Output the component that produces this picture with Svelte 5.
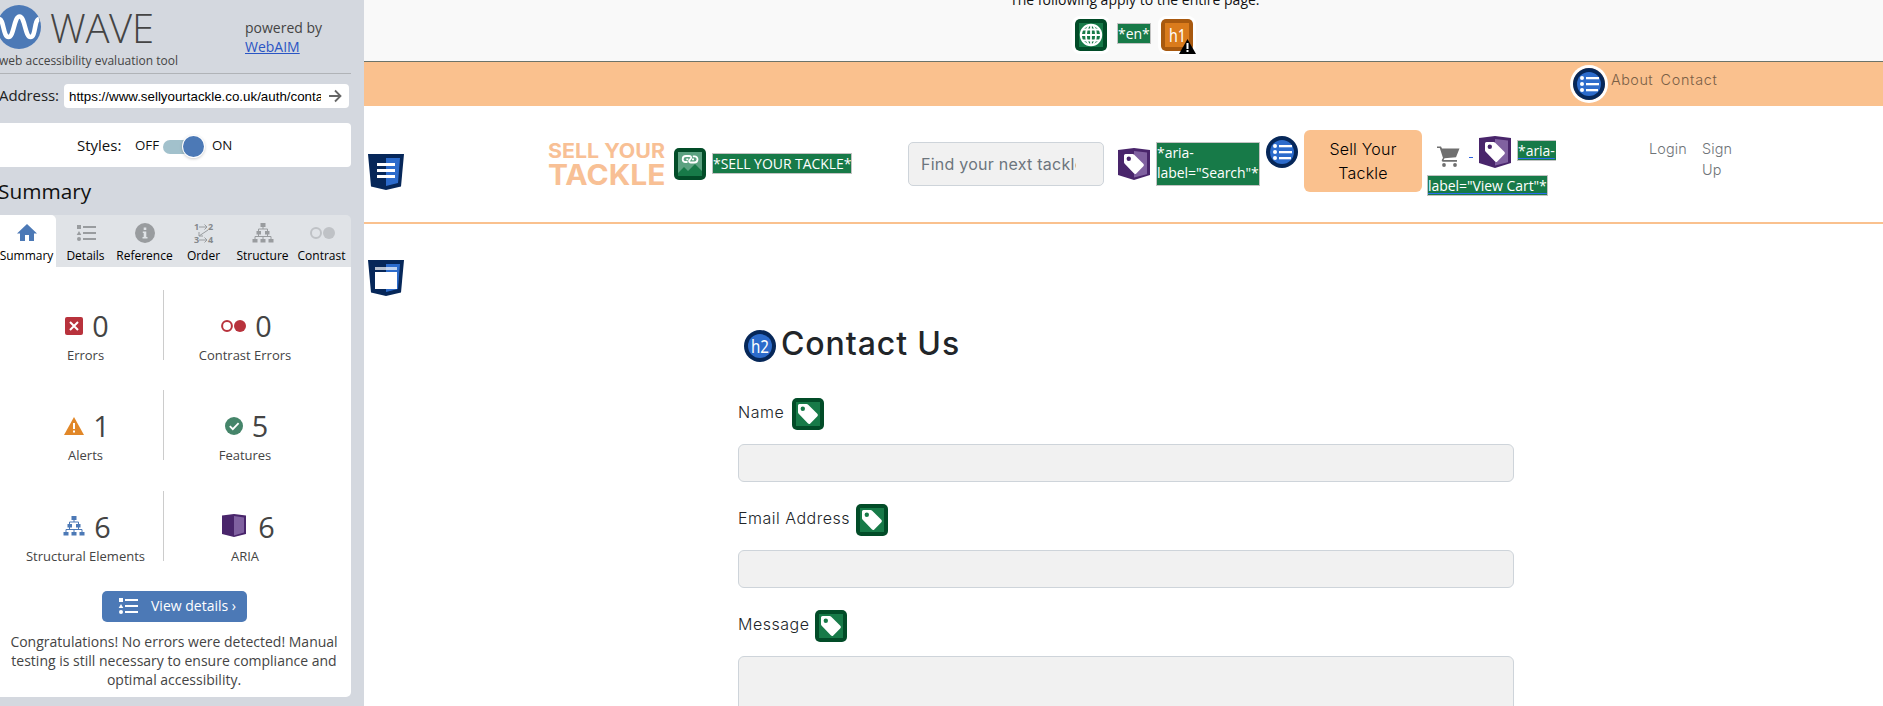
<script>
  const tabs = ['Summary', 'Details', 'Reference', 'Order', 'Structure', 'Contrast'];
  const stats = [
    { icon: 'error', count: 0, label: 'Errors' },
    { icon: 'contrast', count: 0, label: 'Contrast Errors' },
    { icon: 'alert', count: 1, label: 'Alerts' },
    { icon: 'feature', count: 5, label: 'Features' },
    { icon: 'structure', count: 6, label: 'Structural Elements' },
    { icon: 'aria', count: 6, label: 'ARIA' }
  ];
  const fields = [
    { label: 'Name', width: 48, multiline: false },
    { label: 'Email Address', width: 112, multiline: false },
    { label: 'Message', width: 71, multiline: true }
  ];
</script>

{#snippet listGlyph()}
  <svg width="20" height="18" viewBox="0 0 20 18" fill="currentColor">
    <rect x="1" y="1" width="4" height="4" /><path d="M3 7l2.3 4H.7z" /><circle cx="3" cy="15" r="2" />
    <rect x="7" y="2" width="13" height="2" /><rect x="7" y="8" width="13" height="2" /><rect x="7" y="14" width="13" height="2" />
  </svg>
{/snippet}

{#snippet treeGlyph()}
  <svg width="22" height="20" viewBox="0 0 22 20" fill="currentColor">
    <rect x="8.5" y="0" width="5" height="4" />
    <rect x="4.5" y="8" width="4.5" height="3.5" /><rect x="13" y="8" width="4.5" height="3.5" />
    <rect x="0.5" y="16" width="5" height="3.5" /><rect x="8.5" y="16" width="5" height="3.5" /><rect x="16.5" y="16" width="5" height="3.5" />
    <path d="M11 3v3M6.5 8.500V6h9v2.500M6.500 11v2.500M15.500 11v2.500M3 16v-2.500h16V16M11 13v3" fill="none" stroke="currentColor" />
  </svg>
{/snippet}

{#snippet tagPath()}
  <path fill-rule="evenodd" d="M6 7.500Q6 6 7.500 6H14.500Q15.500 6 16.200 6.700L25.300 15.800Q26.600 17.100 25.400 18.300L18.300 25.400Q17.100 26.600 15.800 25.300L6.700 15.800Q6 15.100 6 14.200ZM10.800 8.600A2.200 2.200 0 1 0 10.800 13A2.200 2.200 0 1 0 10.800 8.600Z" fill="#fff" />
{/snippet}

{#snippet greenTag()}
  <svg class="mark" viewBox="0 0 32 32"><rect width="32" height="32" rx="5" fill="#024c28" /><rect x="4" y="4" width="24" height="24" fill="#177a48" />{@render tagPath()}</svg>
{/snippet}

{#snippet ariaTag()}
  <svg class="mark" viewBox="0 0 32 32"><path d="M0 2L16 0l16 2v25l-16 5L0 27z" fill="#49256b" /><path d="M16 3L29 4.500v21.700L16 29.500z" fill="#8061a0" />{@render tagPath()}</svg>
{/snippet}

{#snippet listMark()}
  <svg class="mark" viewBox="0 0 32 32">
    <circle cx="16" cy="16" r="16" fill="#062759" /><circle cx="16" cy="16" r="12" fill="#2c6bcb" />
    <g fill="#fff"><circle cx="9" cy="10" r="2" /><circle cx="9" cy="16" r="2" /><circle cx="9" cy="22" r="2" />
      <rect x="13" y="9" width="13" height="2.300" /><rect x="13" y="15" width="13" height="2.300" /><rect x="13" y="21" width="12" height="2.300" /></g>
  </svg>
{/snippet}

<div class="page">
  <aside>
    <header class="brand">
      <div>
        <div class="logo">
          <svg width="44" height="44" viewBox="0 0 44 44">
            <circle cx="22" cy="22" r="22" fill="#4c79b6" />
            <path d="M2 14C7 14 6 32 11.500 32S17 11.500 22.500 11.500 28 32 33.500 32 37 15 42 14" fill="none" stroke="#fff" stroke-width="4.600" />
          </svg>
          <span>WAVE</span>
        </div>
        <p>web accessibility evaluation tool</p>
      </div>
      <div class="powered">powered by<br /><span class="link">WebAIM</span></div>
    </header>
    <div class="address">
      <span>Address:</span>
      <div class="url">
        <span>https://www.sellyourtackle.co.uk/auth/contact</span>
        <svg width="14" height="14" viewBox="0 0 14 14"><path d="M1 7h11M7 1.500L12.500 7 7 12.500" fill="none" stroke="#666" stroke-width="1.800" /></svg>
      </div>
    </div>
    <div class="styles">
      <span class="name">Styles:</span><span class="off">OFF</span>
      <span class="switch"><i></i></span><span>ON</span>
    </div>
    <h2>Summary</h2>
    <nav class="tabs">
      {#each tabs as tab, i}
        <div class="tab" class:active={i === 0}>
          <div class="glyph">
            {#if i === 0}
              <svg width="20" height="18" viewBox="0 0 20 18"><path d="M10 0l10 9.500h-3V17h-5v-6H8v6H3V9.500H0z" fill="#4c79b6" /></svg>
            {:else if i === 1}{@render listGlyph()}
            {:else if i === 2}
              <svg width="20" height="20" viewBox="0 0 20 20"><circle cx="10" cy="10" r="10" fill="currentColor" /><path d="M8.700 4.500h2.600V7H8.700zM7.800 8.500h3.500v5.500h1.200v1.500H7.500V14h1.200v-4h-.9z" fill="#e0e3e7" /></svg>
            {:else if i === 3}
              <svg class="order" width="20" height="20" viewBox="0 0 20 20">
                <text x="0" y="7">1</text><text x="14" y="7">2</text><text x="0" y="20">3</text><text x="14" y="20">4</text>
                <path d="M5 4h8M10.500 1.500L13 4l-2.500 2.500M5 17h8M10.500 14.500L13 17l-2.500 2.500M14 7l-9 6M5 9v4h4" fill="none" stroke="currentColor" />
              </svg>
            {:else if i === 4}{@render treeGlyph()}
            {:else}
              <svg class="faint" width="26" height="14" viewBox="0 0 26 14"><circle cx="7" cy="7" r="5" fill="none" stroke="currentColor" stroke-width="2" /><circle cx="20" cy="7" r="6" fill="currentColor" /></svg>
            {/if}
          </div>
          {tab}
        </div>
      {/each}
    </nav>
    <section class="panel">
      <div class="stats">
        {#each stats as s}
          <div class="stat">
            <div class="num">
              {#if s.icon === 'error'}
                <svg width="18" height="18" viewBox="0 0 18 18"><rect width="18" height="18" rx="2" fill="#b8323c" /><path d="M5 5l8 8M13 5l-8 8" stroke="#fff" stroke-width="2" /></svg>
              {:else if s.icon === 'contrast'}
                <svg width="25" height="12" viewBox="0 0 25 12"><circle cx="6" cy="6" r="4.900" fill="none" stroke="#b8323c" stroke-width="2" /><circle cx="19" cy="6" r="6" fill="#b8323c" /></svg>
              {:else if s.icon === 'alert'}
                <svg width="20" height="18" viewBox="0 0 20 18"><path d="M10 0l10 18H0z" fill="#e18728" /><path d="M9 6h2v6H9zM9 13.500h2v2H9z" fill="#fff" /></svg>
              {:else if s.icon === 'feature'}
                <svg width="18" height="18" viewBox="0 0 18 18"><circle cx="9" cy="9" r="9" fill="#45856a" /><path d="M4.800 9.200l3 3 5.800-6" fill="none" stroke="#fff" stroke-width="1.800" /></svg>
              {:else if s.icon === 'structure'}
                <span class="blue">{@render treeGlyph()}</span>
              {:else}
                <svg class="aria" width="24" height="23" viewBox="0 0 24 23"><path d="M0 1.500L12 0l12 1.500v18.500L12 23 0 20z" fill="#49256b" /><path d="M12 2l10 1.500v15L12 21.500z" fill="#8061a0" /></svg>
              {/if}
              <b>{s.count}</b>
            </div>
            <div class="label">{s.label}</div>
          </div>
        {/each}
      </div>
      <div class="details">{@render listGlyph()}<span>View details ›</span></div>
      <p class="note">Congratulations! No errors were detected! Manual testing is still necessary to ensure compliance and optimal accessibility.</p>
    </section>
  </aside>

  <main>
    <div class="entire">
      <p>The following apply to the entire page:</p>
      <div class="marks">
        <svg class="mark halo" viewBox="0 0 32 32"><rect width="32" height="32" rx="4" fill="#024c28" /><rect x="4" y="4" width="24" height="24" fill="#177a48" />
          <g fill="none" stroke="#fff" stroke-width="1.800"><circle cx="16" cy="16" r="10.200" stroke-width="2" /><ellipse cx="16" cy="16" rx="5" ry="10.200" /><path d="M16 6v20M6 16h20M7.500 10.500h17M7.500 21.500h17" /></g></svg>
        <span class="alt en">*en*</span>
        <span class="h1mark">
          <svg class="mark halo" viewBox="0 0 32 32"><rect width="32" height="32" rx="4" fill="#a8590f" /><rect x="4" y="4" width="24" height="24" fill="#da7b1c" /><text x="8" y="22.500" font-size="18" fill="#fff" textLength="17" lengthAdjust="spacingAndGlyphs">h1</text></svg>
          <svg class="warn" width="17" height="15" viewBox="0 0 17 15"><path d="M8.500 0L17 15H0z" /><path d="M7.500 4h2v6h-2zM7.500 11h2v2h-2z" fill="#fff" /></svg>
        </span>
      </div>
    </div>

    <div class="topbar">
      <span class="ring">{@render listMark()}</span>
      <span class="about">About</span><span class="contact">Contact</span>
    </div>

    <div class="navbar">
      <svg class="shield" viewBox="0 0 36 36"><path d="M0 0h36l-3 32.500L18 36 3 32.500z" fill="#062759" /><path d="M18 4h14l-2 25-12 3z" fill="#2c6bcb" /><path d="M9 9h18v3H9zM9 15h18v3H9zM9 21h18v3H9z" fill="#fff" /></svg>
      <svg class="shop" width="119" height="44" viewBox="0 0 119 44"><text x="0" y="14.500" font-size="20" textLength="117" lengthAdjust="spacingAndGlyphs">SELL YOUR</text><text x="0" y="41.800" font-size="28.500" textLength="117.500" lengthAdjust="spacingAndGlyphs">TACKLE</text></svg>
      <svg class="mark imgmark" viewBox="0 0 32 32"><rect width="32" height="32" rx="5" fill="#024c28" /><rect x="4" y="4" width="24" height="24" fill="#5ca281" /><path d="M4 25l6-6 4 4 7-7 7 7v5H4z" fill="#177a48" />
        <path d="M13.500 14H11.500a2.800 2.800 0 0 1-2.800-2.800C8.700 9.300 10 8 12 8H15c1.800 0 2.500 1 2 2.200L15.300 12.500c-.7 1.200.2 2 1.700 2h3.200c2 0 3.300-1.500 3.300-3.300A2.900 2.900 0 0 0 20.500 8.300H18.800M12.300 11.300h2M18 11.300h2" fill="none" stroke="#fff" stroke-width="1.800" /></svg>
      <span class="alt sell">*SELL YOUR TACKLE*</span>
      <div class="search"><span>Find your next tackle</span></div>
      <span class="m1">{@render ariaTag()}</span>
      <span class="alt find">*aria-<br />label="Search"*</span>
      <span class="m2">{@render listMark()}</span>
      <div class="cta">Sell Your<br />Tackle</div>
      <div class="cart">
        <div class="cartrow">
          <svg width="23" height="21" viewBox="0 0 23 21" fill="#6f6f6f"><path d="M0 .5h4l1 2h17.500L19 11.300l-11.500 1L6.500 14H20v1.700H5.800Q4 15.500 5 13.500L6 12 2.800 2H0z" /><circle cx="7" cy="19" r="1.900" /><circle cx="18" cy="19" r="1.900" /></svg>
          <span class="dash"></span>
          {@render ariaTag()}
          <span class="alt first">*aria-</span>
        </div>
        <span class="alt second">label="View Cart"*</span>
      </div>
      <div class="account"><span class="login">Login</span><span>Sign<br />Up</span></div>
    </div>

    <div class="content">
      <svg class="shield" viewBox="0 0 36 36"><path d="M0 0h36l-3 32.500L18 36 3 32.500z" fill="#062759" /><path d="M18 4h14l-2 25-12 3z" fill="#2c6bcb" /><path d="M7 7h22v3H7z" fill="#fff" opacity=".7" /><path d="M7 12h22v17H7z" fill="#fff" /></svg>
      <form>
        <h1>
          <svg class="mark" viewBox="0 0 32 32"><circle cx="16" cy="16" r="16" fill="#062759" /><circle cx="16" cy="16" r="12" fill="#2c6bcb" /><text x="7" y="23" font-size="18" fill="#fff" textLength="18" lengthAdjust="spacingAndGlyphs">h2</text></svg>
          <span>Contact Us</span>
        </h1>
        {#each fields as f}
          <div class="field">
            <div class="caption"><span style="width:{f.width}px">{f.label}</span>{@render greenTag()}</div>
            <div class="box" class:tall={f.multiline}></div>
          </div>
        {/each}
      </form>
    </div>
  </main>
</div>

<style>
  :global(body) { margin: 0; overflow: hidden; background: #fff; }
  * { box-sizing: border-box; }
  svg { display: block; flex: none; }
  p, h1, h2 { margin: 0; font-weight: 400; }
  .page { display: flex; width: 1883px; height: 706px; overflow: hidden; }

  aside { width: 364px; flex: none; background: #d4d8df; font-family: 'Open Sans', sans-serif; overflow: hidden; color: #111; }
  .brand { display: flex; width: 351px; height: 74px; border-bottom: 1px solid #b0b3b7; color: #444; }
  .logo { display: flex; height: 53px; padding-top: 5px; margin-left: -3px; }
  .logo span { margin-left: 9px; font-size: 40px; font-weight: 300; line-height: 46px; letter-spacing: -.3px; }
  .brand p { font-size: 12px; line-height: 15px; margin-left: -1px; white-space: nowrap; }
  .brand > div:first-child { width: 245px; }
  .powered { padding-top: 18px; font-size: 14px; line-height: 19px; white-space: nowrap; }
  .link { color: #2a55c4; text-decoration: underline; }
  .address { display: flex; margin-top: 10px; height: 24px; }
  .address > span { width: 65px; margin-left: -1px; font-size: 15px; line-height: 22px; color: #222; letter-spacing: -.1px; }
  .url { display: flex; align-items: center; justify-content: space-between; width: 285px; padding: 0 7px 0 5px; border-radius: 4px; background: #fff; font: 13.333px 'Liberation Sans', sans-serif; color: #000; }
  .url span { width: 252px; overflow: hidden; white-space: nowrap; }
  .styles { display: flex; align-items: center; width: 351px; height: 44px; margin-top: 15px; padding-left: 77px; border-radius: 0 4px 4px 0; background: #fff; font-size: 13.300px; }
  .styles .name { width: 58px; font-size: 15px; }
  .styles .off { width: 28px; }
  .switch { width: 41px; height: 14px; border-radius: 7px; background: #a2c1cc; margin: 3px 8px 0 0; display: flex; align-items: center; justify-content: flex-end; }
  .switch i { width: 21px; height: 21px; flex: none; border-radius: 50%; background: #4c79b6; box-shadow: 0 0 0 1px #fff, 0 1px 3px 1px #0003; }
  h2 { height: 48px; margin-left: -2px; font-size: 20.800px; line-height: 48px; }
  .tabs { display: flex; width: 351px; height: 52px; background: #e0e3e7; border-radius: 0 5px 0 0; font-size: 12px; line-height: 22px; color: #000; }
  .tab { flex: 1; display: flex; flex-direction: column; align-items: center; white-space: nowrap; }
  .tab.active { flex: none; width: 56px; padding-right: 3px; background: #fff; border-radius: 0 5px 0 0; }
  .glyph { height: 30px; padding-top: 5px; display: flex; align-items: center; color: #999c9f; }
  .glyph .faint { color: #bfc2c6; }
  .order text { font: 700 9px 'Open Sans', sans-serif; fill: #85888b; }
  .panel { width: 351px; height: 430px; padding-top: 23px; background: #fff; border-radius: 0 0 5px 0; color: #444; }
  .stats { display: grid; grid-template-columns: 156px 162px; grid-auto-rows: 70px; row-gap: 30.300px; padding-left: 8px; }
  .stat { padding-top: 16px; text-align: center; }
  .stat:nth-child(odd) { border-right: 1px solid #ccc; }
  .num { display: flex; height: 40px; align-items: center; justify-content: center; gap: 9px; padding-left: 3px; }
  .num svg { margin-top: -1px; }
  .num .aria { margin: -3px 3px 0 4px; }
  .num b { font-size: 28.800px; font-weight: 400; line-height: 40px; }
  .blue { color: #4c79b6; }
  .label { font-size: 13px; line-height: 18px; white-space: nowrap; }
  .details { display: flex; align-items: center; width: 145px; height: 31px; margin: 30.400px 0 0 102px; padding-left: 16px; gap: 13px; border-radius: 5px; background: #4c79b6; color: #fff; font-size: 14px; line-height: 18px; white-space: nowrap; }
  .details span { margin-top: -1px; }
  .note { margin: 10px 0 0 0; width: 348px; padding: 0 8px; font-size: 14px; line-height: 19px; text-align: center; }

  main { flex: 1; min-width: 0; font-family: Inter, 'Open Sans', sans-serif; font-weight: 300; color: #212529; }
  .mark { width: 32px; height: 32px; }
  .mark text { font-family: 'Noto Sans', sans-serif; font-weight: 400; }
  .halo { border-radius: 5px; box-shadow: 0 0 0 3px #fff; }
  .alt { display: block; flex: none; border: 1px solid #c3c3c3; background: #177a48; color: #fff; font: 400 14px/19px 'Open Sans', sans-serif; white-space: nowrap; height: 21px; letter-spacing: -.05px; }
  .entire { display: flex; flex-direction: column; height: 62px; background: #f9f9f9; border-bottom: 1px solid #6c7369; font: 400 14px/20px 'Open Sans', sans-serif; color: #111; }
  .entire p { margin: -10px 0 0 646px; height: 29px; flex: none; white-space: nowrap; }
  .marks { display: flex; margin-left: 711px; }
  .en { width: 34px; margin: 4px 10px 0; }
  .h1mark { position: relative; }
  .warn { position: absolute; left: 18px; top: 20px; }
  .topbar { display: flex; height: 44px; padding: 6px 0 0 1209px; background: #fac18e; font-size: 14.400px; color: #7b6046; }
  .ring { margin-right: 6px; height: 32px; border-radius: 50%; box-shadow: 0 0 0 3px #fff; }
  .topbar span { line-height: 24px; }
  .about { width: 49.500px; letter-spacing: .5px; }
  .contact { letter-spacing: .7px; }

  .navbar { display: flex; height: 118px; padding-left: 4px; border-bottom: 2px solid #fac18e; }
  .shield { width: 36px; height: 36px; }
  .navbar .shield { margin-top: 48px; }
  .shop { margin: 37px 0 0 144px; fill: #f8c095; font-family: Inter, sans-serif; font-weight: 750; }
  .imgmark { margin: 42px 6px 0 7px; }
  .sell { width: 140px; margin-top: 47px; }
  .search { flex: none; width: 196px; height: 44px; margin: 36px 14px 0 56px; padding: 0 27px 0 12px; border: 1px solid #ced4da; border-radius: 5px; background: #f1f1f1; font-size: 16px; line-height: 42px; color: #6c757d; font-weight: 400; letter-spacing: .25px; }
  .search span { display: block; overflow: hidden; white-space: nowrap; }
  .m1 { margin: 42px 6px 0 0; }
  .find { width: 104px; height: 44px; margin-top: 36px; line-height: 20px; }
  .m2 { margin: 30px 6px 0; }
  .cta { flex: none; width: 118px; height: 62px; margin-top: 24px; padding-top: 7px; border-radius: 6px; background: #fac18e; color: #000; font-size: 16px; line-height: 24px; text-align: center; letter-spacing: .2px; }
  .cart { width: 130px; margin: 30px 0 0 5px; }
  .cartrow { display: flex; align-items: flex-start; height: 39px; padding-left: 10px; }
  .cartrow > svg:first-child { margin-top: 10px; }
  .dash { width: 4px; height: 1px; margin: 21px 6px 0 9px; background: #2a62e0; }
  .first { width: 39px; margin: 4px 0 0 6px; border-right: 0; }
  .second { width: 121px; }
  .first, .second { text-decoration: underline #2a6cf0 1px; text-underline-offset: 2px; text-decoration-skip-ink: none; }
  .account { display: flex; margin: 24px 0 0 92px; padding-top: 8px; font-size: 14.400px; line-height: 21px; color: #6f7478; letter-spacing: .15px; }
  .login { width: 53px; }

  .content { display: flex; padding: 36px 0 0 4px; }
  form { margin: 70px 0 0 334px; width: 776px; }
  h1 { display: flex; height: 32px; padding-left: 6px; font-size: 32px; line-height: 28px; font-weight: 450; margin-bottom: 36px; letter-spacing: .9px; }
  h1 span { margin-left: 5px; }
  h1 text { letter-spacing: 0; }
  .field { height: 106px; }
  .caption { display: flex; gap: 6px; font-size: 16px; line-height: 28px; letter-spacing: .5px; white-space: nowrap; }
  .box { height: 38px; margin-top: 14px; border: 1px solid #ced4da; border-radius: 6px; background: #f1f1f1; }
  .tall { height: 120px; }
</style>
